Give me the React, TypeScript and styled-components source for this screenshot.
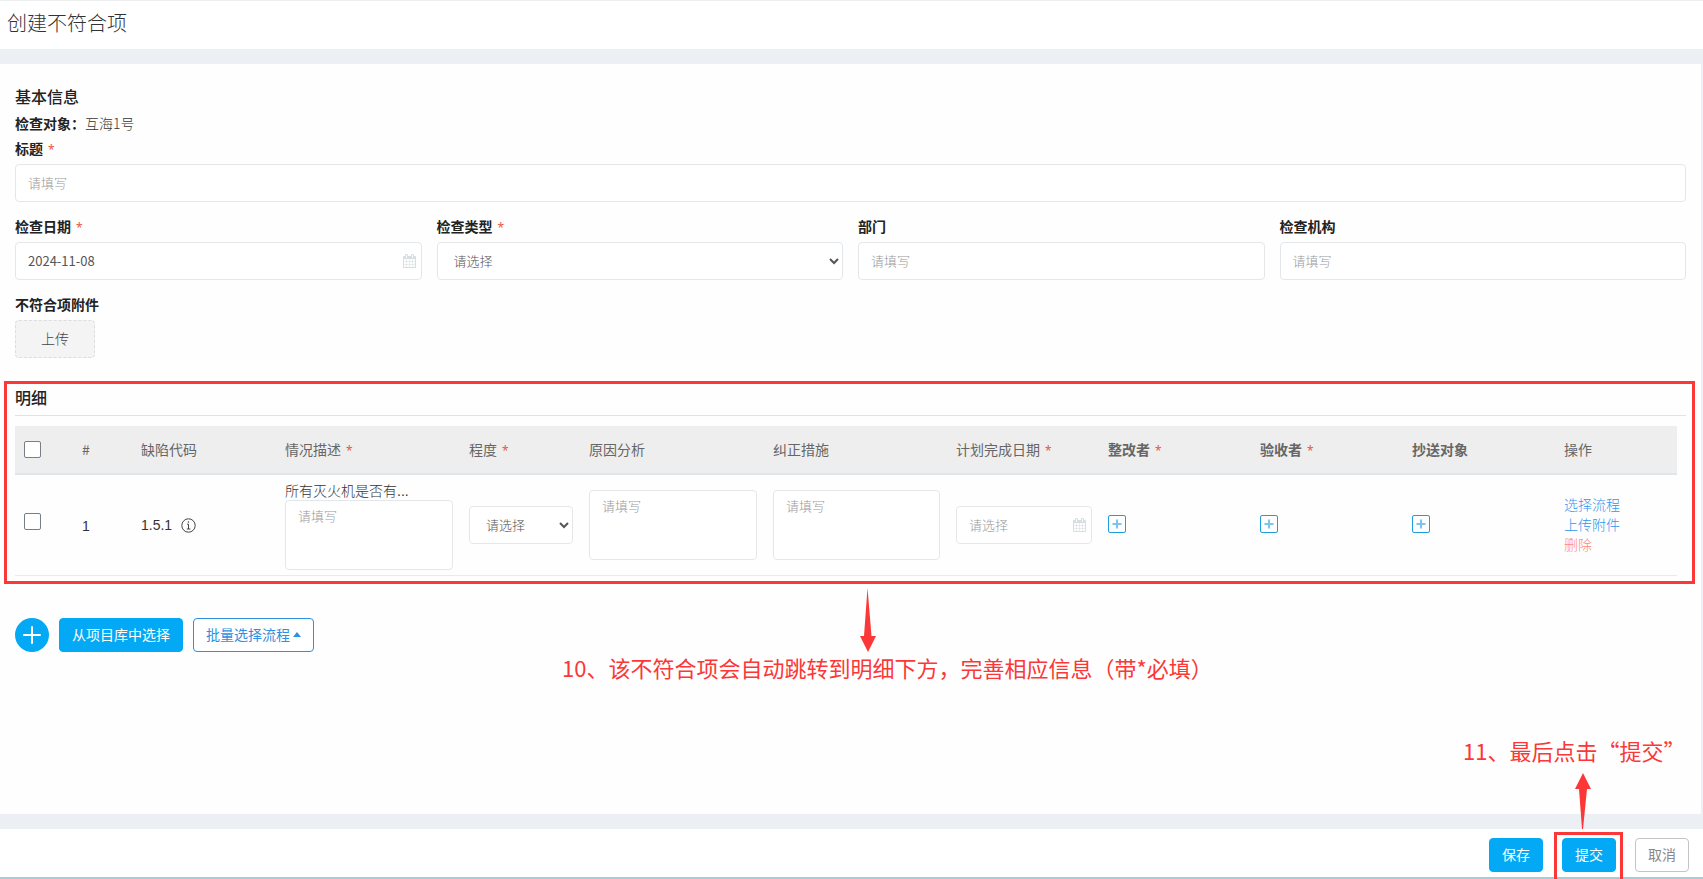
import React from 'react';
import styled, { createGlobalStyle, css } from 'styled-components';

const cjk = '"Noto Sans CJK SC", "Noto Sans", sans-serif';
const blue = '#03a9f4';
const red = '#fb3737';

const GlobalStyle = createGlobalStyle`
  *, *::before, *::after { box-sizing: border-box; }
  body {
    margin: 0;
    background: #ecf0f5;
    color: #333;
    font-family: ${cjk};
    font-size: 14px;
    line-height: 20px;
  }
  button, input, select, textarea { font-family: inherit; margin: 0; }
`;

const Page = styled.div`
  min-height: 100vh;
  display: flex;
  flex-direction: column;
  gap: 15px;
`;

const Header = styled.header`
  height: 49px;
  padding: 8px 7px;
  border-top: 1px solid #eeeff1;
  background: #fff;
`;

const PageTitle = styled.h1`
  margin: 0;
  font-size: 20px;
  line-height: 28px;
  font-weight: 300;
`;

const Card = styled.main`
  flex: 1;
  margin-right: 2px;
  padding: 20px 15px;
  background: #fefefe;
`;

const SectionTitle = styled.h2`
  margin: 0;
  font-size: 16px;
  line-height: 24px;
  font-weight: 500;
  color: #222;
`;

const TargetRow = styled.p`
  margin: 3px 0 0;
  line-height: 25px;
  font-weight: 300;
`;

const Strong = styled.span`
  font-weight: 700;
  color: #222;
`;

const FieldRow = styled.div<{ $columns?: number }>`
  display: grid;
  grid-template-columns: repeat(${(p) => p.$columns ?? 1}, minmax(0, 1fr));
  gap: 15px;
  margin-bottom: 12px;
`;

const Field = styled.div`
  display: flex;
  flex-direction: column;
  align-items: stretch;
  gap: 4px;
`;

const Label = styled.label`
  line-height: 24px;
  font-weight: 700;
  color: #222;
`;

const Star = styled.span`
  margin-left: 5px;
  font-family: "Noto Sans", sans-serif;
  font-size: 12px;
  line-height: 1;
  font-weight: 400;
  color: #e9573f;
`;

const control = css`
  display: block;
  width: 100%;
  border: 1px solid #e4e7ea;
  border-radius: 4px;
  background: #fff;
  color: #555;
  font-size: 13px;
  font-weight: 400;
  outline: none;
  &::placeholder { color: #999; font-weight: 300; opacity: 1; }
`;

const Input = styled.input`
  ${control}
  height: 38px;
  padding: 0 12px 2px;
`;

const Select = styled.select`
  ${control}
  height: 38px;
  padding: 0 0 2px 12px;
  font-weight: 300;
`;

const TextArea = styled.textarea`
  ${control}
  height: 70px;
  padding: 5px 12px;
  line-height: 20px;
  resize: none;
`;

const DateBox = styled.div`
  position: relative;
`;

const DateIcon = styled.svg`
  position: absolute;
  right: 5px;
  top: 12px;
  width: 15px;
  height: 14px;
  fill: #d6dee1;
`;

const UploadButton = styled.button`
  width: 80px;
  height: 38px;
  padding: 0 6px 2px;
  border: 1px dashed #ddd;
  border-radius: 4px;
  background: #f4f4f4;
  color: #444;
  font-size: 14px;
  font-weight: 300;
`;

const Detail = styled.section`
  position: relative;
  margin: 23px -9px 0 -11px;
  padding: 4px 9px 8px 11px;
`;

const DetailHead = styled.div`
  padding-bottom: 6px;
  border-bottom: 1px solid #e3e3e3;
`;

const Highlight = styled.div<{ $inset?: string }>`
  position: absolute;
  inset: ${(p) => p.$inset ?? '0'};
  border: 3px solid ${red};
  pointer-events: none;
`;

const TableWrap = styled.div`
  margin: 10px 9px 0 0;
`;

const Table = styled.table`
  width: 100%;
  table-layout: fixed;
  border-collapse: separate;
  border-spacing: 0;
`;

const Th = styled.th<{ $bold?: boolean }>`
  height: 49px;
  padding: 0 8px 1px;
  border-bottom: 2px solid #e1e6eb;
  background: #eee;
  color: #666;
  text-align: left;
  font-weight: ${(p) => (p.$bold ? 700 : 400)};
`;

const Td = styled.td<{ $raise?: number }>`
  padding: 5px 8px ${(p) => 5 + (p.$raise ?? 0)}px;
  border-bottom: 1px solid #ebebeb;
  font-weight: 300;
`;

const Checkbox = styled.input`
  appearance: none;
  display: block;
  width: 17px;
  height: 17px;
  margin: 0 0 0 1px;
  border: 1px solid #767e88;
  border-radius: 2px;
  background: #fff;
  &:checked { background: ${blue}; border-color: ${blue}; }
`;

const Latin = styled.span`
  font-family: "Liberation Sans", ${cjk};
  font-weight: 400;
  line-height: 1;
`;

const CodeCell = styled.div`
  display: flex;
  align-items: center;
  gap: 9px;
`;

const IconButton = styled.button`
  display: block;
  width: 18px;
  height: 18px;
  padding: 0;
  border: 0;
  background: none;
`;

const ActionLink = styled.a<{ $danger?: boolean }>`
  display: block;
  color: ${(p) => (p.$danger ? '#ff8a75' : '#2f96f0')};
  text-decoration: none;
`;

const Toolbar = styled.div`
  display: flex;
  gap: 10px;
  margin-top: 34px;
`;

const Button = styled.button<{ $kind?: 'primary' | 'outline' | 'plain' }>`
  display: flex;
  align-items: center;
  justify-content: center;
  gap: 3px;
  height: 34px;
  padding: 0 12px 2px;
  border: 1px solid ${(p) => (p.$kind === 'outline' ? '#2f8fe0' : p.$kind === 'plain' ? '#c4c4c4' : blue)};
  border-radius: 4px;
  background: ${(p) => (p.$kind ? '#fff' : blue)};
  color: ${(p) => (p.$kind === 'outline' ? '#2f8fe0' : p.$kind === 'plain' ? '#888' : '#fff')};
  font-size: 14px;
`;

const RoundButton = styled.button`
  display: flex;
  align-items: center;
  justify-content: center;
  width: 34px;
  height: 34px;
  padding: 0;
  border: 0;
  border-radius: 50%;
  background: ${blue};
`;

const Footer = styled.footer`
  display: flex;
  justify-content: flex-end;
  gap: 19px;
  height: 50px;
  padding: 9px 14px 0;
  border-bottom: 2px solid #a8ccd4;
  background: #fff;
`;

const Marked = styled.div`
  position: relative;
`;

const Callout = styled.div`
  position: absolute;
  display: flex;
  flex-direction: column;
  color: ${red};
  font-size: 22px;
  line-height: 30px;
  white-space: nowrap;
`;

const DetailCallout = styled(Callout)`
  top: calc(100% + 4px);
  left: 33%;
`;

const SubmitCallout = styled(Callout)`
  gap: 8px;
  bottom: calc(100% + 9px);
  left: -99px;
`;

const Arrow = styled.svg<{ $indent: number }>`
  display: block;
  margin-left: ${(p) => p.$indent}px;
  fill: ${red};
`;

const Calendar = () => (
  <DateIcon viewBox="0 0 1792 1792" aria-hidden="true">
    <path d="M192 1664h288v-288h-288v288zm352 0h320v-288h-320v288zm-352-352h288v-320h-288v320zm352 0h320v-320h-320v320zm-352-384h288v-288h-288v288zm736 736h320v-288h-320v288zm-384-736h320v-288h-320v288zm768 736h288v-288h-288v288zm-384-352h320v-320h-320v320zm-352-864v-288q0-13-9.5-22.5t-22.5-9.5h-64q-13 0-22.5 9.5t-9.5 22.5v288q0 13 9.5 22.5t22.5 9.5h64q13 0 22.5-9.5t9.5-22.5zm736 864h288v-320h-288v320zm-384-384h320v-288h-320v288zm384 0h288v-288h-288v288zm32-480v-288q0-13-9.5-22.5t-22.5-9.5h-64q-13 0-22.5 9.5t-9.5 22.5v288q0 13 9.5 22.5t22.5 9.5h64q13 0 22.5-9.5t9.5-22.5zm384-64v1280q0 52-38 90t-90 38h-1408q-52 0-90-38t-38-90v-1280q0-52 38-90t90-38h128v-96q0-66 47-113t113-47h64q66 0 113 47t47 113v96h384v-96q0-66 47-113t113-47h64q66 0 113 47t47 113v96h128q52 0 90 38t38 90z" />
  </DateIcon>
);

const InfoIcon = () => (
  <svg width="15" height="15" viewBox="0 0 15 15" fill="none" stroke="#444" aria-hidden="true">
    <circle cx="7.5" cy="7.5" r="6.7" />
    <path d="M6 6.2h1.5v4.8M5.8 11h3.6" />
    <circle cx="7.4" cy="4" r="0.8" fill="#444" stroke="none" />
  </svg>
);

const AddPerson = ({ label }: { label: string }) => (
  <IconButton type="button" aria-label={label}>
    <svg width="18" height="18" viewBox="0 0 18 18" fill="none" aria-hidden="true">
      <rect x="0.5" y="0.5" width="17" height="17" rx="1.5" stroke="#1e9edb" />
      <path d="M9 4.5v9M4.5 9h9" stroke="#7cc5ea" strokeWidth="2" />
    </svg>
  </IconButton>
);

const columns: { title: string; width: number; required?: boolean; bold?: boolean }[] = [
  { title: '#', width: 59 },
  { title: '缺陷代码', width: 144 },
  { title: '情况描述', width: 184, required: true },
  { title: '程度', width: 120, required: true },
  { title: '原因分析', width: 184 },
  { title: '纠正措施', width: 183 },
  { title: '计划完成日期', width: 152, required: true },
  { title: '整改者', width: 152, required: true, bold: true },
  { title: '验收者', width: 152, required: true, bold: true },
  { title: '抄送对象', width: 152, bold: true },
  { title: '操作', width: 121 },
];

export default function App() {
  return (
    <Page lang="zh-CN">
      <GlobalStyle />
      <Header>
        <PageTitle>创建不符合项</PageTitle>
      </Header>

      <Card>
        <SectionTitle>基本信息</SectionTitle>
        <TargetRow>
          <Strong>检查对象：</Strong>互海1号
        </TargetRow>
        <FieldRow>
          <Field>
            <Label htmlFor="title">标题<Star>*</Star></Label>
            <Input id="title" placeholder="请填写" />
          </Field>
        </FieldRow>
        <FieldRow $columns={4}>
          <Field>
            <Label htmlFor="date">检查日期<Star>*</Star></Label>
            <DateBox>
              <Input id="date" defaultValue="2024-11-08" />
              <Calendar />
            </DateBox>
          </Field>
          <Field>
            <Label htmlFor="type">检查类型<Star>*</Star></Label>
            <Select id="type"><option>请选择</option></Select>
          </Field>
          <Field>
            <Label htmlFor="dept">部门</Label>
            <Input id="dept" placeholder="请填写" />
          </Field>
          <Field>
            <Label htmlFor="org">检查机构</Label>
            <Input id="org" placeholder="请填写" />
          </Field>
        </FieldRow>
        <Field>
          <Label htmlFor="upload">不符合项附件</Label>
          <UploadButton id="upload" type="button">上传</UploadButton>
        </Field>

        <Detail>
          <DetailHead>
            <SectionTitle>明细</SectionTitle>
          </DetailHead>
          <TableWrap>
            <Table>
              <colgroup>
                <col width={59} />
                {columns.map((c) => <col key={c.title} width={c.width} />)}
              </colgroup>
              <thead>
                <tr>
                  <Th><Checkbox type="checkbox" aria-label="全选" /></Th>
                  {columns.map((c) => (
                    <Th key={c.title} $bold={c.bold}>
                      {c.title}
                      {c.required && <Star>*</Star>}
                    </Th>
                  ))}
                </tr>
              </thead>
              <tbody>
                <tr>
                  <Td $raise={7}><Checkbox type="checkbox" aria-label="选择第1行" /></Td>
                  <Td><Latin>1</Latin></Td>
                  <Td>
                    <CodeCell><Latin>1.5.1</Latin><InfoIcon /></CodeCell>
                  </Td>
                  <Td>
                    所有灭火机是否有<Latin>...</Latin>
                    <TextArea aria-label="情况描述" placeholder="请填写" />
                  </Td>
                  <Td><Select aria-label="程度"><option>请选择</option></Select></Td>
                  <Td><TextArea aria-label="原因分析" placeholder="请填写" /></Td>
                  <Td><TextArea aria-label="纠正措施" placeholder="请填写" /></Td>
                  <Td>
                    <DateBox>
                      <Input aria-label="计划完成日期" placeholder="请选择" />
                      <Calendar />
                    </DateBox>
                  </Td>
                  <Td $raise={2}><AddPerson label="添加整改者" /></Td>
                  <Td $raise={2}><AddPerson label="添加验收者" /></Td>
                  <Td $raise={2}><AddPerson label="添加抄送对象" /></Td>
                  <Td $raise={2}>
                    <ActionLink href="#flow">选择流程</ActionLink>
                    <ActionLink href="#attach">上传附件</ActionLink>
                    <ActionLink href="#delete" $danger>删除</ActionLink>
                  </Td>
                </tr>
              </tbody>
            </Table>
          </TableWrap>
          <Highlight />
          <DetailCallout>
            <Arrow $indent={298} width="16" height="64" viewBox="0 0 16 64" aria-hidden="true">
              <path d="M7.5 0L11.5 48H16L8 64L0 48H4Z" />
            </Arrow>
            10、该不符合项会自动跳转到明细下方，完善相应信息（带*必填）
          </DetailCallout>
        </Detail>

        <Toolbar>
          <RoundButton type="button" aria-label="添加">
            <svg width="18" height="18" viewBox="0 0 18 18" stroke="#fff" strokeWidth="2" strokeLinecap="round" aria-hidden="true">
              <path d="M9 1v16M1 9h16" />
            </svg>
          </RoundButton>
          <Button type="button">从项目库中选择</Button>
          <Button type="button" $kind="outline">
            批量选择流程
            <svg width="8" height="5" viewBox="0 0 8 5" fill="#2f8fe0" aria-hidden="true">
              <path d="M0 5L4 0L8 5Z" />
            </svg>
          </Button>
        </Toolbar>
      </Card>

      <Footer>
        <Button type="button">保存</Button>
        <Marked>
          <Button type="button">提交</Button>
          <Highlight $inset="-6px -7px -6px -8px" />
          <SubmitCallout>
            11、最后点击“提交”
            <Arrow $indent={112} width="16" height="56" viewBox="0 0 16 56" aria-hidden="true">
              <path d="M8 0L16 16H12L8 56H7L4 16H0Z" />
            </Arrow>
          </SubmitCallout>
        </Marked>
        <Button type="button" $kind="plain">取消</Button>
      </Footer>
    </Page>
  );
}
